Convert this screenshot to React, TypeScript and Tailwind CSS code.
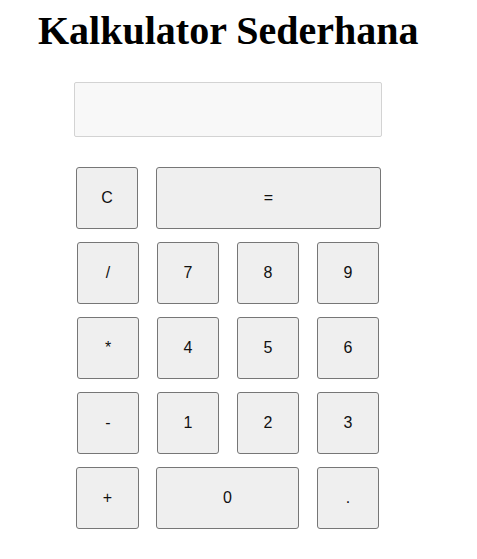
import React from 'react';

const Key: React.FC<{ label: string; className?: string }> = ({ label, className = 'w-[62px]' }) => (
  <button
    className={`h-[62px] ${className} shrink-0 rounded-[3px] border border-[#767676] bg-[#efefef] text-[16px] text-[#111] font-['Liberation_Sans',Arial,sans-serif]`}
  >
    {label}
  </button>
);

const App: React.FC = () => {
  return (
    <div className="w-[477px] h-[559px] bg-white overflow-hidden">
      <h1 className="pt-[8px] pl-[38px] text-[40px] leading-[46px] font-bold text-black font-['Liberation_Serif','Times_New_Roman',serif]">
        Kalkulator Sederhana
      </h1>

      {/* display */}
      <div className="mt-[28px] ml-[74px] w-[308px] h-[55px] border border-[#d3d3d3] bg-[#f8f8f8] rounded-[2px]" />

      <div className="mt-[30px] flex flex-col gap-[13px]">
        <div className="flex ml-[76px] gap-[18px]">
          <Key label="C" />
          <Key label="=" className="w-[225px]" />
        </div>
        <div className="flex ml-[77px] gap-[18px]">
          <Key label="/" />
          <Key label="7" />
          <Key label="8" />
          <Key label="9" />
        </div>
        <div className="flex ml-[77px] gap-[18px]">
          <Key label="*" />
          <Key label="4" />
          <Key label="5" />
          <Key label="6" />
        </div>
        <div className="flex ml-[77px] gap-[18px]">
          <Key label="-" />
          <Key label="1" />
          <Key label="2" />
          <Key label="3" />
        </div>
        <div className="flex ml-[76px]">
          <Key label="+" className="w-[63px]" />
          <Key label="0" className="ml-[17px] w-[143px]" />
          <Key label="." className="ml-[18px] w-[62px]" />
        </div>
      </div>
    </div>
  );
};

export default App;
